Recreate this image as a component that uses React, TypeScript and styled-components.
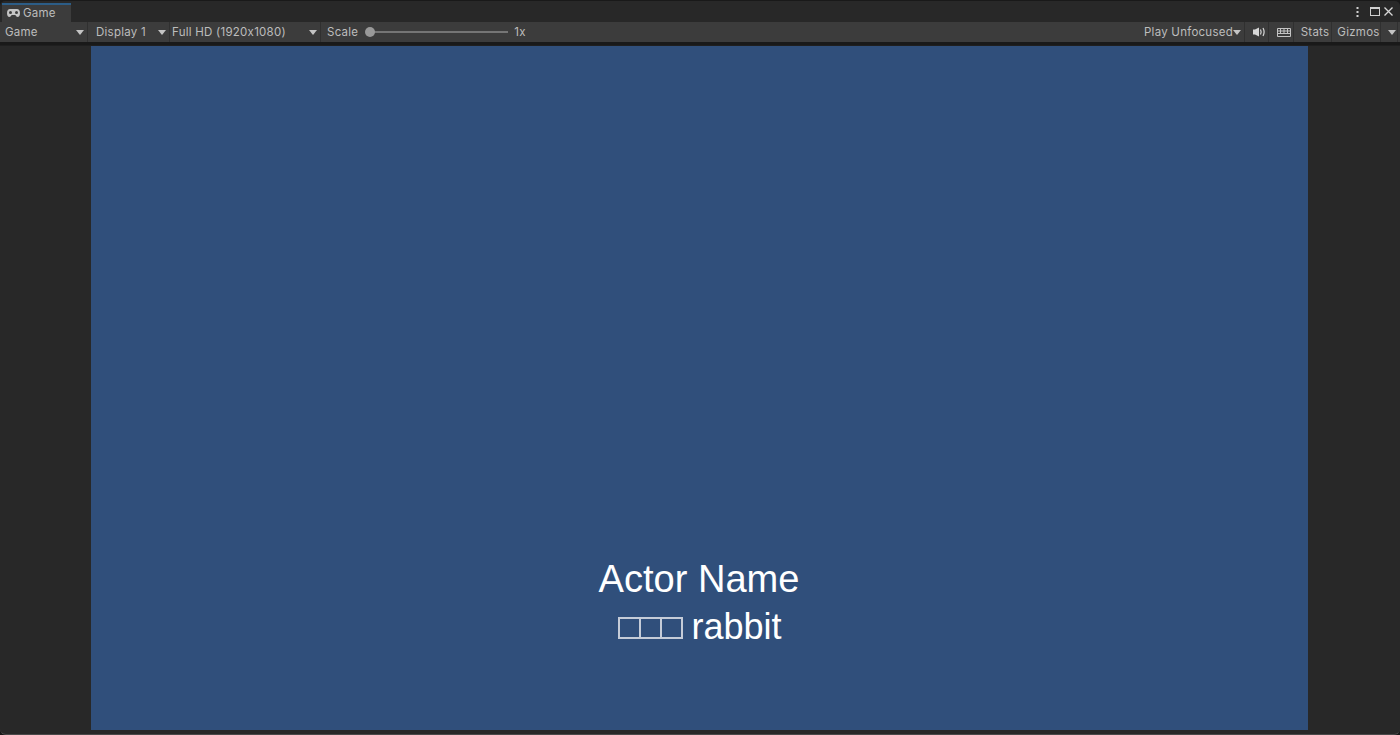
import styled, { createGlobalStyle } from 'styled-components';

const GlobalStyle = createGlobalStyle`
  html, body {
    margin: 0;
    padding: 0;
    height: 100%;
    overflow: hidden;
    background: #191919;
  }
  #root {
    height: 100%;
  }
`;

const Window = styled.div`
  width: 1400px;
  height: 735px;
  box-sizing: border-box;
  padding-top: 1px;
  display: flex;
  flex-direction: column;
  background: #191919;
  font-family: Inter, 'Liberation Sans', sans-serif;
  font-size: 11.5px;
  letter-spacing: 0.25px;
  color: #bdbdbd;
`;

const TabBar = styled.div`
  height: 21px;
  flex: none;
  display: flex;
  justify-content: space-between;
  align-items: flex-end;
  padding-left: 2px;
  background: #282828;
  border-radius: 5px 5px 0 0;
`;

const Tab = styled.div`
  width: 69px;
  height: 19px;
  box-sizing: border-box;
  display: flex;
  align-items: center;
  gap: 3px;
  padding: 0 0 1px 5px;
  background: #3c3c3c;
  border-top: 2px solid #2c5d87;
`;

const WindowButtons = styled.div`
  display: flex;
  align-items: center;
  height: 21px;
  gap: 4px;
  padding-right: 7px;
`;

const Toolbar = styled.div`
  height: 20px;
  flex: none;
  display: flex;
  align-items: center;
  justify-content: space-between;
  padding-right: 2px;
  background: #3c3c3c;
`;

const ToolGroup = styled.div`
  height: 100%;
  display: flex;
  align-items: center;
`;

const ToolItem = styled.div<{ $width: number; $center?: boolean; $pad?: number }>`
  width: ${(p) => p.$width}px;
  height: 100%;
  box-sizing: border-box;
  display: flex;
  align-items: center;
  justify-content: ${(p) => (p.$center ? 'center' : 'space-between')};
  padding: 0 ${(p) => (p.$center ? 0 : 3)}px 0 ${(p) => p.$pad ?? 5}px;
  border-right: 1px solid #303030;
  white-space: nowrap;
`;

const Caret = styled.span`
  flex: none;
  width: 0;
  height: 0;
  border-left: 4.5px solid transparent;
  border-right: 4.5px solid transparent;
  border-top: 5px solid #c4c4c4;
`;

const ScaleGroup = styled.div`
  height: 100%;
  display: flex;
  align-items: center;
  padding-left: 6px;
`;

const Track = styled.div`
  position: relative;
  width: 138px;
  height: 2px;
  margin: 0 6px 0 12px;
  background: #757575;
`;

const Thumb = styled.div`
  position: absolute;
  left: -5px;
  top: -4px;
  width: 10px;
  height: 10px;
  border-radius: 50%;
  background: #999999;
`;

const Viewport = styled.div`
  flex: 1;
  display: flex;
  justify-content: center;
  margin-top: 3px;
  padding: 0 2px 4px 0;
  background: #282828;
  border-top: 1px solid #1f1f1f;
  border-radius: 0 0 6px 6px;
  border-bottom: 1px solid #4a4a4a;
`;

const GameView = styled.div`
  width: 1217px;
  display: flex;
  flex-direction: column;
  align-items: center;
  justify-content: flex-end;
  padding-bottom: 79px;
  box-sizing: border-box;
  background: #304f7b;
  color: #ffffff;
  font-family: 'Liberation Sans', Arial, sans-serif;
  letter-spacing: 0;
`;

const ActorName = styled.div`
  font-size: 38.100px;
  line-height: 48px;
`;

const DialogLine = styled.div`
  font-size: 36px;
  line-height: 48px;
  display: flex;
  align-items: center;
  gap: 10px;
  padding-left: 2px;
`;

const TofuRow = styled.div`
  display: flex;
  margin-top: 1px;
`;

const Tofu = styled.span`
  width: 23px;
  height: 22px;
  box-sizing: border-box;
  margin-right: -2px;
  border: 2px solid #c5ccd8;
`;

const GamepadIcon = () => (
  <svg width="13" height="8" viewBox="0 0 13 8">
    <path
      fill="#c4c4c4"
      d="M3 0h7c1.7 0 3 1.5 3 4s-1 4-2.3 4c-1 0-1.6-1-2.4-2H4.700C3.900 7 3.300 8 2.300 8 1 8 0 6.500 0 4s1.300-4 3-4z"
    />
    <circle cx="3.500" cy="3.500" r="1.500" fill="#3c3c3c" />
    <circle cx="9.500" cy="3.500" r="1.500" fill="#3c3c3c" />
  </svg>
);

const KebabIcon = () => (
  <svg width="3" height="10" viewBox="0 0 3 10">
    <rect x="0.500" y="0" width="2" height="2" fill="#d0d0d0" />
    <rect x="0.500" y="4" width="2" height="2" fill="#d0d0d0" />
    <rect x="0.500" y="8" width="2" height="2" fill="#d0d0d0" />
  </svg>
);

const MaximizeIcon = () => (
  <svg width="10" height="9" viewBox="0 0 10 9" style={{ marginLeft: 7 }}>
    <rect x="0.500" y="0.500" width="9" height="8" fill="none" stroke="#d0d0d0" />
    <rect x="0" y="0" width="10" height="2" fill="#d0d0d0" />
  </svg>
);

const CloseIcon = () => (
  <svg width="9" height="9" viewBox="0 0 9 9">
    <path d="M0.500 0.500l8 8M8.500 0.500l-8 8" stroke="#d8d8d8" strokeWidth="1.300" />
  </svg>
);

const AudioIcon = () => (
  <svg width="13" height="10" viewBox="0 0 13 10">
    <path fill="#d8d8d8" d="M0 2.500h2L6 0.500v9L2 7.500H0z" />
    <path d="M7.500 2.500c.8 1.500.8 3.500 0 5M10 1c1.400 2.500 1.400 5.500 0 8" fill="none" stroke="#d8d8d8" strokeWidth="1.200" />
  </svg>
);

const StatsGridIcon = () => (
  <svg width="14" height="9" viewBox="0 0 14 9">
    <path
      d="M0.500 0.500h13v8h-13zM0.500 3h13M0.500 5.500h13M3.500 0.500v5M7 0.500v5M10.500 0.500v5"
      fill="none"
      stroke="#c4c4c4"
      strokeWidth="1"
    />
  </svg>
);

const App = () => {
  return (
    <>
      <GlobalStyle />
      <Window>
        <TabBar>
          <Tab>
            <GamepadIcon />
            Game
          </Tab>
          <WindowButtons>
            <KebabIcon />
            <MaximizeIcon />
            <CloseIcon />
          </WindowButtons>
        </TabBar>
        <Toolbar>
          <ToolGroup>
            <ToolItem $width={88}>
              Game
              <Caret />
            </ToolItem>
            <ToolItem $width={82} $pad={8}>
              Display 1
              <Caret />
            </ToolItem>
            <ToolItem $width={151} $pad={2}>
              Full HD (1920x1080)
              <Caret />
            </ToolItem>
            <ScaleGroup>
              Scale
              <Track>
                <Thumb />
              </Track>
              1x
            </ScaleGroup>
          </ToolGroup>
          <ToolGroup>
            <ToolItem $width={105} $pad={4}>
              Play Unfocused
              <Caret />
            </ToolItem>
            <ToolItem $width={24} $center>
              <AudioIcon />
            </ToolItem>
            <ToolItem $width={25} $center>
              <StatsGridIcon />
            </ToolItem>
            <ToolItem $width={38} $center>
              Stats
            </ToolItem>
            <ToolItem $width={49} $center>
              Gizmos
            </ToolItem>
            <ToolItem $width={17} $center>
              <Caret />
            </ToolItem>
          </ToolGroup>
        </Toolbar>
        <Viewport>
          <GameView>
            <ActorName>Actor Name</ActorName>
            <DialogLine>
              <TofuRow>
                <Tofu />
                <Tofu />
                <Tofu />
              </TofuRow>
              rabbit
            </DialogLine>
          </GameView>
        </Viewport>
      </Window>
    </>
  );
};

export default App;
